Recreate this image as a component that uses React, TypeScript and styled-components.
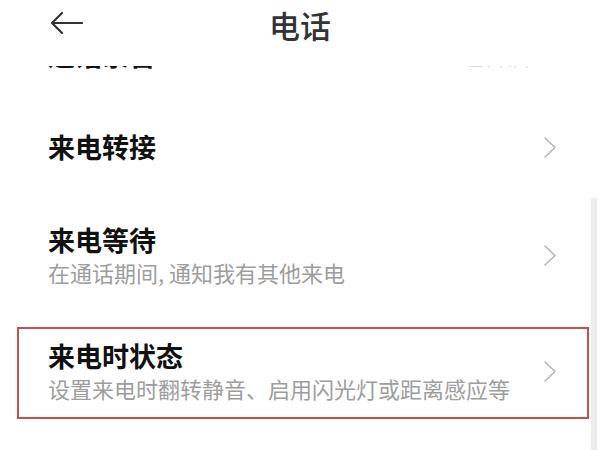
import React, { FC } from 'react'
import styled, { createGlobalStyle, css } from 'styled-components'

const GlobalStyle = createGlobalStyle`
  html, body {
    margin: 0;
    padding: 0;
    background: #ffffff;
  }
  body {
    width: 600px;
    height: 450px;
    overflow: hidden;
    font-family: 'Noto Sans CJK SC', 'Noto Sans', sans-serif;
  }
`

const Page = styled.div`
  display: flex;
  flex-direction: column;
  width: 600px;
  height: 450px;
  background: #ffffff;
`

const Header = styled.header`
  height: 66px;
  flex-shrink: 0;
  display: grid;
  grid-template-columns: 1fr auto 1fr;
  align-items: start;
  background: #ffffff;
`

const BackButton = styled.div`
  padding: 12px 0 0 50px;

  svg {
    display: block;
  }
`

const Title = styled.h1`
  margin: 5px 0 0;
  font-size: 31px;
  line-height: 40px;
  font-weight: 500;
  color: #333333;
`

const Viewport = styled.div`
  position: relative;
  flex: 1;
  overflow: hidden;
`

// list is scrolled a little, so the first row only peeks out under the header
const Scroller = styled.div`
  margin-top: -53px;
`

const ScrollBar = styled.span`
  position: absolute;
  top: 132px;
  right: 3px;
  bottom: 0;
  width: 6px;
  background: #ececec;
`

const Row = styled.div<{ $height: number; $highlighted?: boolean }>`
  position: relative;
  display: flex;
  align-items: center;
  justify-content: space-between;
  box-sizing: border-box;
  height: ${({ $height }) => $height}px;
  padding: 0 44px 0 48px;

  ${({ $highlighted }) =>
    $highlighted &&
    css`
      &::after {
        content: '';
        position: absolute;
        top: 14px;
        right: 11px;
        bottom: 10px;
        left: 17px;
        border: 2px solid #c9504a;
      }
    `}
`

const Texts = styled.div`
  display: flex;
  flex-direction: column;
`

const ItemTitle = styled.span`
  font-size: 27px;
  line-height: 34px;
  font-weight: 700;
  color: #111111;
`

const Summary = styled.span`
  font-size: 22px;
  line-height: 30px;
  color: #9d9d9d;
`

const Trailing = styled.div`
  display: flex;
  align-items: center;
  gap: 14px;
`

const Value = styled.span`
  font-size: 22px;
  line-height: 30px;
  color: #dedede;
`

const Chevron: FC = () => (
  <svg width="12" height="21" viewBox="0 0 12 21" fill="none">
    <path d="M1 1 L11 10.5 L1 20" stroke="#b3b3b3" strokeWidth="1.5" strokeLinecap="round" strokeLinejoin="round" />
  </svg>
)

const BackArrow: FC = () => (
  <svg width="33" height="22" viewBox="0 0 33 22" fill="none">
    <path d="M2 11 H32 M12 1 L2 11 L12 21" stroke="#333333" strokeWidth="2.2" strokeLinecap="round" strokeLinejoin="round" />
  </svg>
)

interface Item {
  title: string
  summary?: string
  value?: string
  height?: number
  highlighted?: boolean
}

const items: Item[] = [
  { title: '通话录音', value: '已开启', height: 84 },
  { title: '来电转接' },
  { title: '来电等待', summary: '在通话期间, 通知我有其他来电' },
  { title: '来电时状态', summary: '设置来电时翻转静音、启用闪光灯或距离感应等', highlighted: true },
]

const App: FC = () => (
  <>
    <GlobalStyle />
    <Page>
      <Header>
        <BackButton>
          <BackArrow />
        </BackButton>
        <Title>电话</Title>
        <span />
      </Header>

      <Viewport>
        <Scroller>
          {items.map((item) => (
            <Row
              key={item.title}
              $height={item.height ?? (item.summary ? 116 : 100)}
              $highlighted={item.highlighted}
            >
              <Texts>
                <ItemTitle>{item.title}</ItemTitle>
                {item.summary && <Summary>{item.summary}</Summary>}
              </Texts>
              <Trailing>
                {item.value && <Value>{item.value}</Value>}
                <Chevron />
              </Trailing>
            </Row>
          ))}
        </Scroller>
        <ScrollBar />
      </Viewport>
    </Page>
  </>
)

export default App
